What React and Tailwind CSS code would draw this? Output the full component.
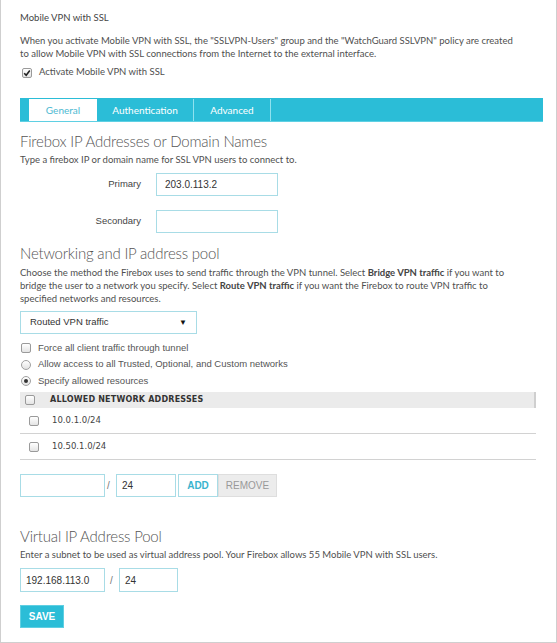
import React from "react";

const BODY = { fontFamily: "'Lato', 'Open Sans', sans-serif" };
const ARIAL = { fontFamily: "'Liberation Sans', Arial, sans-serif" };
const VERDANA = { fontFamily: "'DejaVu Sans', Verdana, sans-serif" };

const Box = ({ checked }) => (
  <span className="w-[10px] h-[10px] rounded-[2px] border border-[#9a9a9a] bg-gradient-to-b from-white to-[#e4e4e4] flex items-center justify-center shrink-0">
    {checked && (
      <svg width="8" height="8" viewBox="0 0 8 8">
        <path d="M1.2 4.2 L3.2 6.2 L6.8 1.6" fill="none" stroke="#222" strokeWidth="1.6" />
      </svg>
    )}
  </span>
);

const Radio = ({ on }) => (
  <span className="w-[10px] h-[10px] rounded-full border border-[#a0a0a0] bg-gradient-to-b from-white to-[#e2e2e2] flex items-center justify-center shrink-0">
    {on && <span className="w-[4px] h-[4px] rounded-full bg-[#333]" />}
  </span>
);

const Field = ({ value, className }) => (
  <div
    className={`h-[23px] border border-[#a8dce6] bg-white flex items-center text-[10px] text-[#333] ${className}`}
    style={ARIAL}
  >
    {value}
  </div>
);

const App = () => {
  return (
    <div
      className="w-[557px] h-[643px] border-x border-b border-[#cfcfcf] bg-white pl-[19px] pr-[13px] pt-[10px] text-[#4f4f4f]"
      style={BODY}
    >
      <p className="text-[9.5px] leading-[15px] text-[#444]">Mobile VPN with SSL</p>
      <p className="mt-[10px] text-[9.5px] leading-[12.5px]">
        When you activate Mobile VPN with SSL, the "SSLVPN-Users" group and the "WatchGuard SSLVPN" policy are created
        <br />
        to allow Mobile VPN with SSL connections from the Internet to the external interface.
      </p>
      <div className="mt-[6px] h-[13px] flex items-center gap-[7px] pl-[2px]">
        <Box checked />
        <span className="text-[9.5px]">Activate Mobile VPN with SSL</span>
      </div>

      {/* Tabs */}
      <div className="mt-[19px] h-[24px] bg-[#2bbdd7] flex pl-[9px] pt-[1px] border-b border-[#5fd0e3]">
        <div className="w-[68px] bg-white flex items-center justify-center text-[10px] text-[#4cb9d2]">General</div>
        <div className="w-[97px] flex items-center justify-center text-[10px] text-white border-r border-[#8fe2ef]">
          Authentication
        </div>
        <div className="w-[77px] flex items-center justify-center text-[10px] text-white border-r border-[#8fe2ef]">
          Advanced
        </div>
      </div>

      {/* Firebox IP */}
      <h2 className="mt-[9px] text-[15px] leading-[20px] font-light tracking-[-0.2px] text-[#555]">
        Firebox IP Addresses or Domain Names
      </h2>
      <p className="mt-[2px] text-[9.5px] leading-[13px]">Type a firebox IP or domain name for SSL VPN users to connect to.</p>
      <div className="mt-[7px] flex items-center">
        <span className="w-[121px] text-right text-[9.5px] text-[#444]" style={ARIAL}>Primary</span>
        <Field value="203.0.113.2" className="ml-[15px] w-[122px] px-[8px]" />
      </div>
      <div className="mt-[14px] flex items-center">
        <span className="w-[121px] text-right text-[9.5px] text-[#444]" style={ARIAL}>Secondary</span>
        <Field value="" className="ml-[15px] w-[122px] px-[8px]" />
      </div>

      {/* Networking */}
      <h2 className="mt-[10px] text-[15px] leading-[20px] font-light tracking-[-0.2px] text-[#555]">
        Networking and IP address pool
      </h2>
      <p className="mt-[3px] text-[9.5px] leading-[13px]">
        Choose the method the Firebox uses to send traffic through the VPN tunnel. Select{" "}
        <b className="font-bold text-[#444]">Bridge VPN traffic</b> if you want to
        <br />
        bridge the user to a network you specify. Select <b className="font-bold text-[#444]">Route VPN traffic</b> if
        you want the Firebox to route VPN traffic to
        <br />
        specified networks and resources.
      </p>
      <div
        className="mt-[6px] w-[177px] h-[23px] border border-[#a8dce6] flex items-center justify-between pl-[9px] pr-[9px] text-[9.5px] text-[#333]"
        style={ARIAL}
      >
        <span>Routed VPN traffic</span>
        <span className="text-[8px] text-[#111]">▼</span>
      </div>
      <div className="mt-[6px] flex flex-col text-[9.5px] text-[#555]" style={ARIAL}>
        <div className="h-[16px] flex items-center gap-[7px] pl-[1px]">
          <Box />
          <span>Force all client traffic through tunnel</span>
        </div>
        <div className="h-[17px] flex items-center gap-[7px] pl-[1px]">
          <Radio />
          <span>Allow access to all Trusted, Optional, and Custom networks</span>
        </div>
        <div className="h-[16px] flex items-center gap-[7px] pl-[1px]">
          <Radio on />
          <span>Specify allowed resources</span>
        </div>
      </div>

      {/* Table */}
      <div className="mt-[3px] w-[516px]" style={VERDANA}>
        <div className="h-[16px] bg-[#ebebeb] border-r-2 border-[#cfcfcf] flex items-center pl-[5px]">
          <Box />
          <span className="ml-[15px] text-[8px] font-bold text-[#333] tracking-[0.2px]">ALLOWED NETWORK ADDRESSES</span>
        </div>
        {["10.0.1.0/24", "10.50.1.0/24"].map((a) => (
          <div key={a} className="h-[26px] border-b border-[#d2d2d2] flex items-center pl-[9px]">
            <Box />
            <span className="ml-[13px] text-[8.5px] text-[#444]">{a}</span>
          </div>
        ))}
      </div>

      <div className="mt-[14px] flex items-center">
        <Field value="" className="w-[85px] px-[6px]" />
        <span className="ml-[2px] w-[9px] text-[10px] text-[#777]" style={ARIAL}>/</span>
        <Field value="24" className="w-[60px] px-[5px]" />
        <div className="ml-[2px] w-[40px] h-[23px] border border-[#a8dce6] flex items-center justify-center text-[10px] font-semibold text-[#3bb4ce]" style={ARIAL}>
          ADD
        </div>
        <div className="w-[59px] h-[23px] bg-[#ececec] border border-[#dedede] flex items-center justify-center text-[10px] text-[#999]" style={ARIAL}>
          REMOVE
        </div>
      </div>

      {/* Virtual IP */}
      <h2 className="mt-[29px] text-[15px] leading-[20px] font-light tracking-[-0.2px] text-[#555]">
        Virtual IP Address Pool
      </h2>
      <p className="mt-[2px] text-[9.5px] leading-[13px]">
        Enter a subnet to be used as virtual address pool. Your Firebox allows 55 Mobile VPN with SSL users.
      </p>
      <div className="mt-[7px] flex items-center">
        <Field value="192.168.113.0" className="w-[85px] !h-[24px] px-[5px]" />
        <span className="ml-[5px] w-[9px] text-[10px] text-[#777]" style={ARIAL}>/</span>
        <Field value="24" className="w-[59px] !h-[24px] px-[5px]" />
      </div>
      <div className="mt-[13px] w-[44px] h-[23px] bg-[#2bbdd7] border border-[#5fcfe2] flex items-center justify-center text-[10px] font-bold text-white" style={ARIAL}>
        SAVE
      </div>
    </div>
  );
};

export default App;
